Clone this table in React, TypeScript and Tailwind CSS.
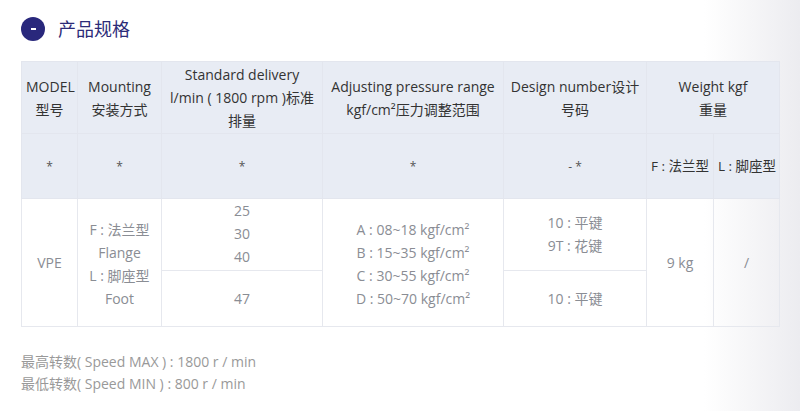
export default function App() {
  const th = 'border border-[#e3e6ee] bg-[#e8ecf4] text-[#333] font-normal align-middle text-center px-1';
  const td = 'border border-[#e6e8ee] text-[#8a8d94] align-middle text-center px-1';

  return (
    <div
      className="w-[800px] h-[411px] overflow-hidden bg-linear-to-r from-white from-[88%] to-[#ececf0] pt-[17px] pl-[21px]"
      style={{ fontFamily: '"Open Sans", "Noto Sans CJK SC", sans-serif' }}
    >
      {/* Title */}
      <div className="flex items-center gap-[13px] h-[24px]">
        <div className="w-[24px] h-[24px] rounded-full bg-[#29287c] flex items-center justify-center">
          <div className="w-[5px] h-[2px] bg-white" />
        </div>
        <span className="text-[18px] font-normal text-[#2c2b78]">产品规格</span>
      </div>

      {/* Spec table */}
      <table className="mt-[20px] w-[758px] border-collapse text-[14px] leading-[23px] table-fixed">
        <colgroup>
          <col className="w-[56px]" />
          <col className="w-[84px]" />
          <col className="w-[161px]" />
          <col className="w-[181px]" />
          <col className="w-[143px]" />
          <col className="w-[67px]" />
          <col className="w-[66px]" />
        </colgroup>
        <thead>
          <tr className="h-[72px]">
            <th className={th}>MODEL<br />型号</th>
            <th className={th}>Mounting<br />安装方式</th>
            <th className={th}>Standard delivery<br />l/min ( 1800 rpm )标准<br />排量</th>
            <th className={th}>Adjusting pressure range<br />kgf/cm²压力调整范围</th>
            <th className={th}>Design number设计<br />号码</th>
            <th className={th} colSpan={2}>Weight kgf<br />重量</th>
          </tr>
          <tr className="h-[65px]">
            <th className={`${th} text-[12px] text-[#555]`}>*</th>
            <th className={`${th} text-[12px] text-[#555]`}>*</th>
            <th className={`${th} text-[12px] text-[#555]`}>*</th>
            <th className={`${th} text-[12px] text-[#555]`}>*</th>
            <th className={`${th} text-[12px] text-[#555]`}>- *</th>
            <th className={`${th} whitespace-nowrap text-[13.5px] px-0`}>F : 法兰型</th>
            <th className={`${th} whitespace-nowrap text-[13.5px] px-0`}>L : 脚座型</th>
          </tr>
        </thead>
        <tbody>
          <tr className="h-[71px]">
            <td className={td} rowSpan={2}>VPE</td>
            <td className={`${td} pt-[2px]`} rowSpan={2}>F : 法兰型<br />Flange<br />L : 脚座型<br />Foot</td>
            <td className={`${td} pb-[2px]`}>25<br />30<br />40</td>
            <td className={`${td} pt-[2px]`} rowSpan={2}>
              A : 08~18 kgf/cm²<br />B : 15~35 kgf/cm²<br />C : 30~55 kgf/cm²<br />D : 50~70 kgf/cm²
            </td>
            <td className={`${td} pb-[2px]`}>10 : 平键<br />9T : 花键</td>
            <td className={td} rowSpan={2}>9 kg</td>
            <td className={td} rowSpan={2}>/</td>
          </tr>
          <tr className="h-[56px]">
            <td className={td}>47</td>
            <td className={td}>10 : 平键</td>
          </tr>
        </tbody>
      </table>

      {/* Speed notes */}
      <div className="mt-[24px] text-[14px] leading-[22px] text-[#999]">
        <p>最高转数( Speed MAX ) : 1800 r / min</p>
        <p>最低转数( Speed MIN ) : 800 r / min</p>
      </div>
    </div>
  );
}
